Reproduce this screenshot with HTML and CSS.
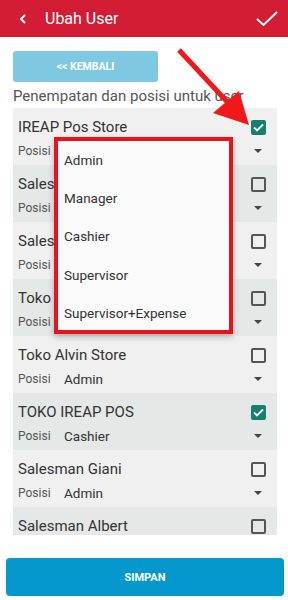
FILE: index.html
```html
<!DOCTYPE html>
<html>
<head>
<meta charset="utf-8">
<link rel="stylesheet" href="styles.css">
</head>
<body>
<div class="app">
  <header class="topbar">
    <svg class="back" width="8" height="10" viewBox="0 0 8 10"><path d="M6 1 L2 5 L6 9" fill="none" stroke="#fff" stroke-width="2"/></svg>
    <span class="title">Ubah User</span>
    <svg class="ok" width="22" height="16" viewBox="0 0 22 16"><path d="M1 8 L7.5 14 L21 1" fill="none" stroke="#fff" stroke-width="2"/></svg>
  </header>
  <main class="content">
    <button class="btn-back">&lt;&lt; KEMBALI</button>
    <p class="intro">Penempatan dan posisi untuk user</p>
    <div class="list">
      <div class="row light"><div class="line"><span class="name">IREAP Pos Store</span><span class="cb checked"><svg width="11" height="9" viewBox="0 0 11 9"><path d="M1 4.5 L4 7.5 L10 1.5" fill="none" stroke="#fff" stroke-width="1.8"/></svg></span></div><div class="pos"><span class="lbl">Posisi</span><span class="val">Admin</span><span class="caret"></span></div></div>
      <div class="row dark"><div class="line"><span class="name">Salesman Giani</span><span class="cb"></span></div><div class="pos"><span class="lbl">Posisi</span><span class="val">Admin</span><span class="caret"></span></div></div>
      <div class="row light"><div class="line"><span class="name">Salesman Albert</span><span class="cb"></span></div><div class="pos"><span class="lbl">Posisi</span><span class="val">Admin</span><span class="caret"></span></div></div>
      <div class="row dark"><div class="line"><span class="name">Toko Alvin Store</span><span class="cb"></span></div><div class="pos"><span class="lbl">Posisi</span><span class="val">Admin</span><span class="caret"></span></div></div>
      <div class="row light"><div class="line"><span class="name">Toko Alvin Store</span><span class="cb"></span></div><div class="pos"><span class="lbl">Posisi</span><span class="val">Admin</span><span class="caret"></span></div></div>
      <div class="row dark"><div class="line"><span class="name">TOKO IREAP POS</span><span class="cb checked"><svg width="11" height="9" viewBox="0 0 11 9"><path d="M1 4.5 L4 7.5 L10 1.5" fill="none" stroke="#fff" stroke-width="1.8"/></svg></span></div><div class="pos"><span class="lbl">Posisi</span><span class="val">Cashier</span><span class="caret"></span></div></div>
      <div class="row light"><div class="line"><span class="name">Salesman Giani</span><span class="cb"></span></div><div class="pos"><span class="lbl">Posisi</span><span class="val">Admin</span><span class="caret"></span></div></div>
      <div class="row dark"><div class="line"><span class="name">Salesman Albert</span><span class="cb"></span></div></div>
    </div>
    <button class="btn-save">SIMPAN</button>
  </main>
  <div class="menu">
    <div class="item">Admin</div>
    <div class="item">Manager</div>
    <div class="item">Cashier</div>
    <div class="item">Supervisor</div>
    <div class="item">Supervisor+Expense</div>
  </div>
  <svg class="arrow" width="288" height="140" viewBox="0 0 288 140">
    <line x1="179" y1="50" x2="232" y2="107" stroke="#f01818" stroke-width="5"/>
    <polygon points="249,125 213,113 239,91" fill="#f01818"/>
  </svg>
</div>
</body>
</html>
```

FILE: styles.css
```css
* { box-sizing: border-box; }
html, body { margin: 0; padding: 0; }
body {
  font-family: Roboto, "Noto Sans", "Liberation Sans", sans-serif;
  background: #fff;
  width: 288px;
  height: 600px;
  overflow: hidden;
}
.app { position: relative; width: 288px; height: 600px; }
.topbar {
  height: 37px;
  background: #d21d35;
  display: flex;
  align-items: center;
  padding: 0 10px 0 19px;
}
.back { display: block; margin-right: 18px; }
.title { color: #fff; font-size: 16px; flex: 1; }
.ok { display: block; }
.content { display: flex; flex-direction: column; }
.btn-back {
  margin: 14px 0 0 13px;
  width: 145px;
  height: 31px;
  border: none;
  border-radius: 3px;
  background: #7fc8e1;
  color: #fff;
  font-family: inherit;
  font-weight: 700;
  font-size: 10.5px;
  padding: 0;
}
.intro {
  margin: 4px 0 0 13px;
  height: 20px;
  line-height: 20px;
  font-size: 15px;
  color: #555;
}
.list {
  margin: 2px 11px 0 13px;
  height: 427px;
  overflow: hidden;
}
.row { height: 57px; padding: 0 11px 0 5px; }
.row.light { background: #f0f0f0; }
.row.dark { background: #e4e8e7; }
.line {
  display: flex;
  align-items: center;
  justify-content: space-between;
  height: 36px;
  padding-top: 2px;
}
.name { font-size: 15px; color: #333; }
.cb {
  width: 15px; height: 15px;
  border: 2px solid #555;
  border-radius: 2px;
  display: flex; align-items: center; justify-content: center;
}
.cb.checked { background: #16806e; border-color: #16806e; }
.cb svg { display: block; }
.pos {
  display: flex;
  align-items: center;
  height: 14px;
}
.lbl { font-size: 12px; color: #555; width: 46px; }
.val { font-size: 13.5px; color: #333; flex: 1; }
.caret {
  width: 0; height: 0;
  border-left: 4px solid transparent;
  border-right: 4px solid transparent;
  border-top: 4px solid #444;
  margin-right: 4px;
}
.btn-save {
  margin: 23px 4px 0 6px;
  height: 38px;
  border: none;
  border-radius: 4px;
  background: #0598cc;
  color: #fff;
  font-family: inherit;
  font-weight: 700;
  font-size: 11px;
  padding: 0;
}
.menu {
  position: absolute;
  left: 54px;
  top: 137px;
  width: 179px;
  height: 197px;
  border: 4px solid #ea1219;
  background: #fafafa;
  box-shadow: 0 3px 6px rgba(0,0,0,0.25);
}
.item {
  height: 38.8px;
  display: flex;
  align-items: center;
  padding-left: 6px;
  font-size: 13.5px;
  color: #333;
  margin-top: -0.5px;
}
.arrow { position: absolute; left: 0; top: 0; }
```
